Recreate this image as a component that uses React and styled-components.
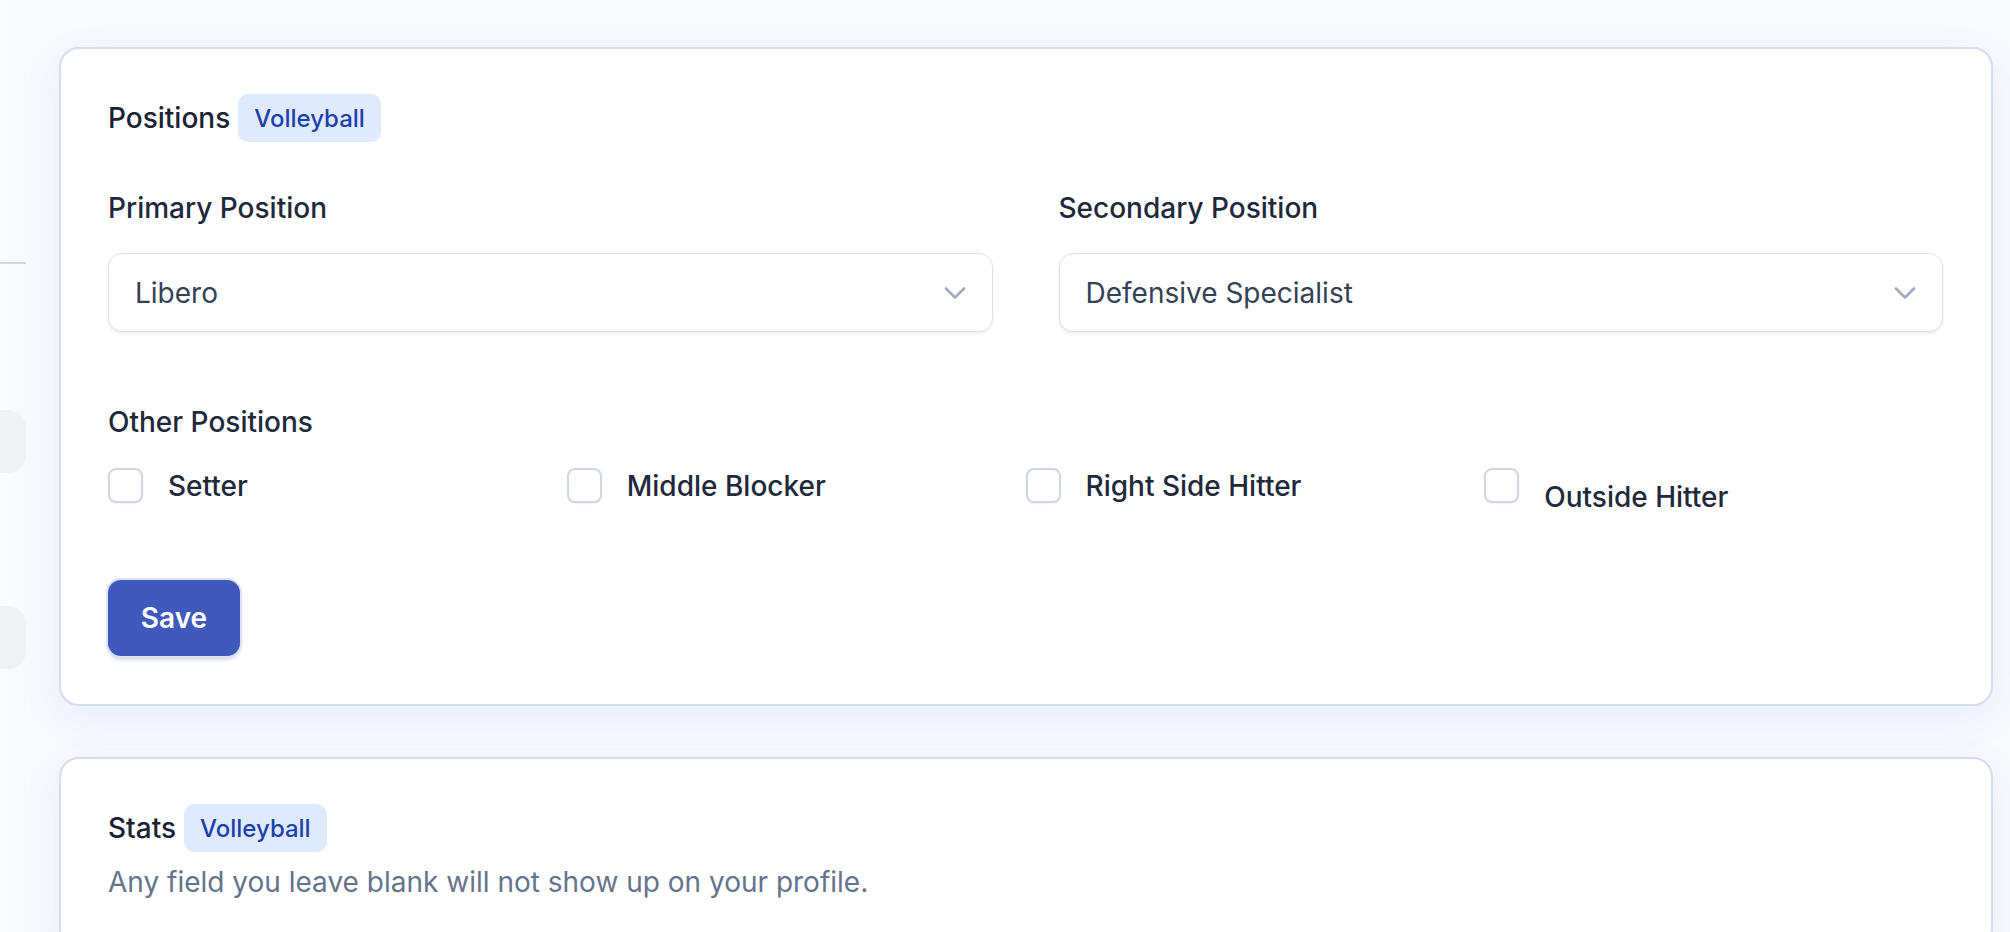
import { createGlobalStyle, styled } from "styled-components";

const GlobalStyle = createGlobalStyle`
    * {
        box-sizing: border-box;
    }

    body {
        margin: 0;
        background: #f7f9fd;
        font-family: Inter, "Noto Sans", sans-serif;
        color: #1e293b;
        -webkit-font-smoothing: antialiased;
    }
`;

const Page = styled.div`
    display: flex;
    min-height: 932px;
    overflow: hidden;
`;

const Sidebar = styled.aside`
    width: 26px;
    flex-shrink: 0;
    display: flex;
    flex-direction: column;
    padding-top: 262px;
    background: linear-gradient(90deg, #fbfcfe, #f6f8fd);
`;

const SidebarDivider = styled.div`
    height: 2px;
    background: #d3d6dd;
    margin-bottom: 146px;
`;

const SidebarItem = styled.div`
    height: 63px;
    background: #eff1f5;
    border-radius: 0 18px 18px 0;
    margin-bottom: 133px;
`;

const Main = styled.main`
    flex: 1;
    display: flex;
    flex-direction: column;
    gap: 51px;
    padding: 47px 17px 0 33px;
`;

const Card = styled.section`
    background: #ffffff;
    border: 2px solid #d7ddf1;
    border-radius: 20px;
    padding: 45px 48px 48px 47px;
    box-shadow: 0 12px 40px rgba(90, 110, 200, 0.08);
`;

const CardHeader = styled.div`
    display: flex;
    align-items: center;
    gap: 8px;
`;

const CardTitle = styled.h2`
    margin: 0;
    font-size: 28px;
    line-height: 34px;
    font-weight: 500;
    color: #1a2234;
`;

const Badge = styled.span`
    display: inline-flex;
    align-items: center;
    height: 48px;
    padding: 0 16px;
    border-radius: 10px;
    background: #dfeafd;
    color: #1e3fae;
    font-size: 24px;
    font-weight: 500;
`;

const FieldGrid = styled.div`
    display: grid;
    grid-template-columns: 1fr 1fr;
    gap: 66px;
    margin-top: 49px;
`;

const Field = styled.div`
    display: flex;
    flex-direction: column;
    gap: 28px;
`;

const Label = styled.label`
    font-size: 28px;
    line-height: 34px;
    font-weight: 500;
    color: #1e293b;
`;

const SelectBox = styled.div`
    display: flex;
    align-items: center;
    justify-content: space-between;
    height: 79px;
    padding: 0 26px;
    border: 1.5px solid #dde2ec;
    border-radius: 14px;
    background: #ffffff;
    box-shadow: 0 2px 3px rgba(15, 23, 42, 0.07);
    font-size: 28px;
    color: #334155;
`;

const OtherSection = styled.div`
    display: flex;
    flex-direction: column;
    gap: 29px;
    margin-top: 73px;
`;

const CheckGrid = styled.div`
    display: grid;
    grid-template-columns: repeat(4, 1fr);
    align-items: start;
`;

const CheckOption = styled.label`
    display: flex;
    align-items: flex-start;
    gap: 25px;
    font-size: 28px;
    line-height: 34px;
    font-weight: 500;
    color: #1e293b;
`;

// the last option's text sits a little lower than its box
const CheckText = styled.span`
    margin-top: ${(p) => (p.$drop ? "12px" : "1px")};
`;

const CheckBox = styled.input.attrs({ type: "checkbox" })`
    appearance: none;
    margin: 0;
    width: 35px;
    height: 35px;
    flex-shrink: 0;
    border: 2px solid #cfd6e4;
    border-radius: 8px;
    background: #ffffff;
    box-shadow: 0 1px 2px rgba(15, 23, 42, 0.06);
`;

const SaveButton = styled.button`
    align-self: flex-start;
    margin-top: 66px;
    width: 132px;
    height: 76px;
    border: none;
    border-radius: 13px;
    background: #4059ba;
    color: #ffffff;
    font-family: inherit;
    font-size: 28px;
    font-weight: 600;
    box-shadow: 0 0 0 2px #dde2f2, 0 3px 4px rgba(40, 60, 140, 0.25);
`;

const Form = styled.div`
    display: flex;
    flex-direction: column;
`;

const Hint = styled.p`
    margin: 13px 0 0;
    font-size: 28px;
    line-height: 34px;
    color: #64748b;
`;

function Chevron() {
    return (
        <svg width="22" height="14" viewBox="0 0 22 14" fill="none">
            <path d="M2 2.5l9 9 9-9" stroke="#a3acbd" strokeWidth="2.6" strokeLinecap="round" strokeLinejoin="round" />
        </svg>
    );
}

const otherPositions = [
    { name: "Setter" },
    { name: "Middle Blocker" },
    { name: "Right Side Hitter" },
    { name: "Outside Hitter", drop: true },
];

export default function App() {
    return (
        <>
            <GlobalStyle />
            <Page>
                <Sidebar>
                    <SidebarDivider />
                    <SidebarItem />
                    <SidebarItem />
                </Sidebar>

                <Main>
                    <Card>
                        <Form>
                            <CardHeader>
                                <CardTitle>Positions</CardTitle>
                                <Badge>Volleyball</Badge>
                            </CardHeader>

                            <FieldGrid>
                                <Field>
                                    <Label>Primary Position</Label>
                                    <SelectBox>
                                        <span>Libero</span>
                                        <Chevron />
                                    </SelectBox>
                                </Field>
                                <Field>
                                    <Label>Secondary Position</Label>
                                    <SelectBox>
                                        <span>Defensive Specialist</span>
                                        <Chevron />
                                    </SelectBox>
                                </Field>
                            </FieldGrid>

                            <OtherSection>
                                <Label>Other Positions</Label>
                                <CheckGrid>
                                    {otherPositions.map((pos) => (
                                        <CheckOption key={pos.name}>
                                            <CheckBox />
                                            <CheckText $drop={pos.drop}>{pos.name}</CheckText>
                                        </CheckOption>
                                    ))}
                                </CheckGrid>
                            </OtherSection>

                            <SaveButton>Save</SaveButton>
                        </Form>
                    </Card>

                    <Card>
                        <CardHeader>
                            <CardTitle>Stats</CardTitle>
                            <Badge>Volleyball</Badge>
                        </CardHeader>
                        <Hint>Any field you leave blank will not show up on your profile.</Hint>
                    </Card>
                </Main>
            </Page>
        </>
    );
}
